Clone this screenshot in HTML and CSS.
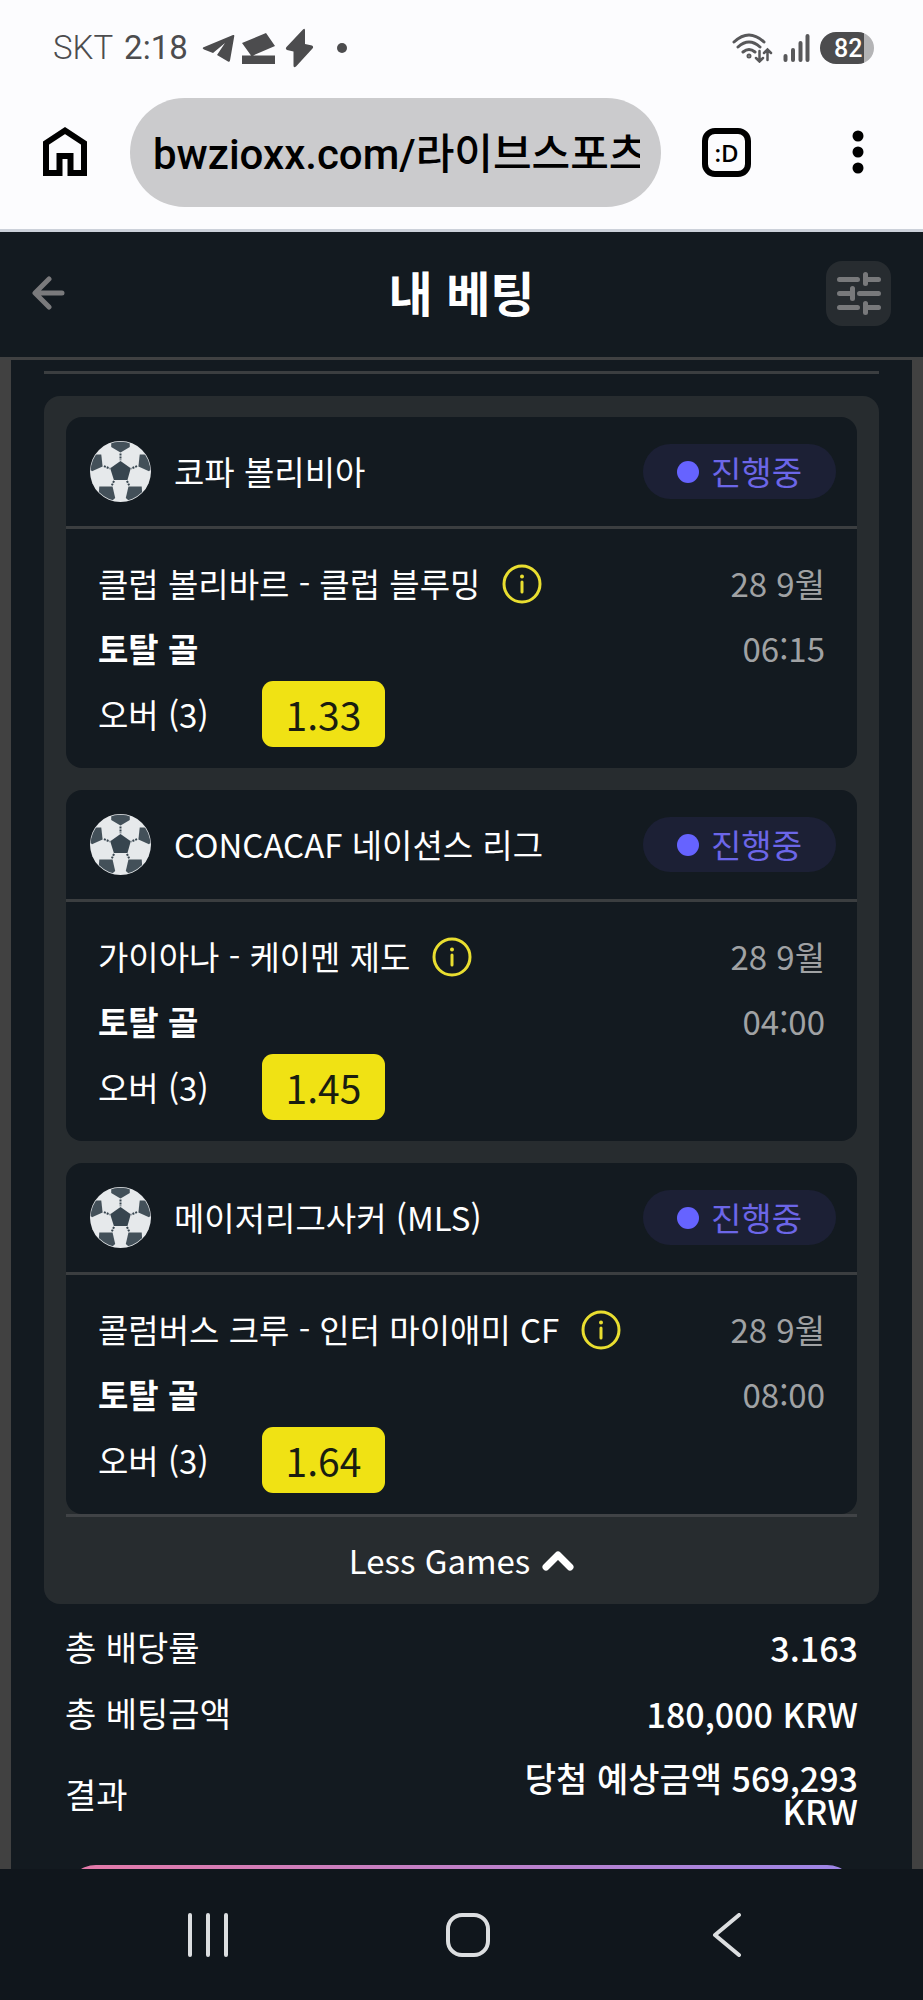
FILE: index.html
```html
<!DOCTYPE html>
<html lang="ko">
<head>
    <meta charset="UTF-8">
    <meta name="viewport" content="width=device-width, initial-scale=1.0">
    <title>내 베팅</title>
    <link rel="stylesheet" href="styles.css">
</head>
<body>
    <!-- shared icons -->
    <svg class="sprite" aria-hidden="true">
        <symbol id="ball" viewBox="0 0 184 184">
            <clipPath id="ball-clip"><circle cx="92" cy="92" r="90"/></clipPath>
            <circle cx="92" cy="92" r="92" fill="#e6e9eb"/>
            <g fill="#435059" clip-path="url(#ball-clip)">
                <path fill="#37454f" d="M92 60l31 22-10 36H72L61 82z"/>
                <path d="M64 0h56v18L92 35 64 18z"/>
                <path d="M34 41l4 36L6 91l-10-10 16-40z"/>
                <path d="M150 41l-4 36 32 14 10-10-16-40z"/>
                <path d="M28 137h40l8 35-16 14-34-20z"/>
                <path d="M156 137h-40l-8 35 16 14 34-20z"/>
            </g>
            <path d="M92 38v20M42 76l18 7M142 76l-18 7M66 134l7-15M118 134l-7-15" fill="none" stroke="#37454f" stroke-width="6" stroke-dasharray="6 3"/>
        </symbol>
        <symbol id="info" viewBox="0 0 40 40">
            <circle cx="20" cy="20" r="18" fill="none" stroke="currentColor" stroke-width="3"/>
            <circle cx="20" cy="12.500" r="2" fill="currentColor"/>
            <path d="M20 18v10" stroke="currentColor" stroke-width="3" stroke-linecap="round"/>
        </symbol>
    </svg>

    <!-- STATUS BAR -->
    <div class="status-bar">
        <div class="status-left">
            <span class="carrier">SKT</span>
            <span class="clock">2:18</span>
            <svg class="status-icons" width="146" height="40" viewBox="0 0 146 40" fill="#4c4c4e">
                <path d="M1 19.500L31 7q1.500-.5 1.300 1L28 32.500q-.5 2-2 1L15 27l8-12-12 10-9-3.500q-2-1 -1-2z"/>
                <path d="M40 15l24-10 9 13-22 9.500h22V36H40v-8.500h9z"/>
                <path d="M101 1.500q2-2 2 1V16l7 1.500q2 1 .5 3L94 38.500q-2.500 2-2.500-1V23.500L85 22q-2-1-.5-3z"/>
                <circle cx="140" cy="20" r="5"/>
            </svg>
        </div>
        <div class="status-right">
            <svg width="41" height="30" viewBox="0 0 41 30" fill="none" stroke="#58585a" stroke-width="3" stroke-linecap="round">
                <path d="M2 9q15-14 30 0M6 14q11-10 22 0M11 19q6-5 12 0"/>
                <circle cx="17" cy="23" r="1"/>
                <path stroke-width="2.500" d="M27.500 18v10M24 25l3.500 3.500L31 25M35.500 27V17M32 20l3.500-3.500L39 20"/>
            </svg>
            <svg width="27" height="30" viewBox="0 0 27 30" stroke="#58585a" stroke-width="4" stroke-linecap="round">
                <path d="M2.500 23v4M10 17v10M17.500 10v17M24.500 3v24"/>
            </svg>
            <span class="battery">82</span>
        </div>
    </div>

    <!-- BROWSER TOOLBAR -->
    <div class="toolbar">
        <button class="icon-btn" aria-label="홈">
            <svg width="46" height="52" viewBox="0 0 46 52" fill="none" stroke="#000" stroke-width="6">
                <path d="M4 47V17L23 4.500 42 17v30H28.500V30h-11v17z"/>
            </svg>
        </button>
        <div class="address">
            <input type="text" class="address-input" value="bwzioxx.com/라이브스포츠" aria-label="주소">
        </div>
        <button class="tabs-btn" aria-label="탭">:D</button>
        <button class="icon-btn menu-btn" aria-label="메뉴">
            <svg width="12" height="46" viewBox="0 0 12 46">
                <circle cx="6" cy="7" r="5.500"/>
                <circle cx="6" cy="23" r="5.500"/>
                <circle cx="6" cy="39" r="5.500"/>
            </svg>
        </button>
    </div>

    <!-- PAGE HEADER -->
    <header class="page-header">
        <button class="icon-btn" aria-label="뒤로">
            <svg width="34" height="34" viewBox="0 0 34 34" fill="none" stroke="#7a7a7c" stroke-width="5" stroke-linecap="round" stroke-linejoin="round">
                <path d="M30 17H4M17 3L3 17l14 14"/>
            </svg>
        </button>
        <h1>내 베팅</h1>
        <button class="filter-btn" aria-label="필터">
            <svg width="65" height="65" viewBox="0 0 65 65" stroke="#78797b" stroke-width="5" stroke-linecap="round">
                <path d="M13.500 18.500h18M39.500 13.500v9M39.500 18.500h13M13.500 32.500h12M26.500 27.500v10M33.500 32.500h19M13.500 46.500h18M39.500 42.500v9M39.500 46.500h13"/>
            </svg>
        </button>
    </header>

    <!-- BET SLIP -->
    <main class="content">
        <hr class="divider">
        <section class="games">
            <article class="game">
                <div class="game-head">
                    <svg class="ball"><use href="#ball"/></svg>
                    <h2>코파 볼리비아</h2>
                    <span class="status">진행중</span>
                </div>
                <div class="game-body">
                    <div class="row">
                        <span>클럽 볼리바르 - 클럽 블루밍</span>
                        <button class="icon-btn info" aria-label="정보"><svg><use href="#info"/></svg></button>
                        <span class="when">28 9월</span>
                    </div>
                    <div class="row">
                        <strong>토탈 골</strong>
                        <span class="when">06:15</span>
                    </div>
                    <div class="row">
                        <span class="pick">오버 (3)</span>
                        <span class="odds">1.33</span>
                    </div>
                </div>
            </article>

            <article class="game">
                <div class="game-head">
                    <svg class="ball"><use href="#ball"/></svg>
                    <h2>CONCACAF 네이션스 리그</h2>
                    <span class="status">진행중</span>
                </div>
                <div class="game-body">
                    <div class="row">
                        <span>가이아나 - 케이멘 제도</span>
                        <button class="icon-btn info" aria-label="정보"><svg><use href="#info"/></svg></button>
                        <span class="when">28 9월</span>
                    </div>
                    <div class="row">
                        <strong>토탈 골</strong>
                        <span class="when">04:00</span>
                    </div>
                    <div class="row">
                        <span class="pick">오버 (3)</span>
                        <span class="odds">1.45</span>
                    </div>
                </div>
            </article>

            <article class="game">
                <div class="game-head">
                    <svg class="ball"><use href="#ball"/></svg>
                    <h2>메이저리그사커 (MLS)</h2>
                    <span class="status">진행중</span>
                </div>
                <div class="game-body">
                    <div class="row">
                        <span>콜럼버스 크루 - 인터 마이애미 CF</span>
                        <button class="icon-btn info" aria-label="정보"><svg><use href="#info"/></svg></button>
                        <span class="when">28 9월</span>
                    </div>
                    <div class="row">
                        <strong>토탈 골</strong>
                        <span class="when">08:00</span>
                    </div>
                    <div class="row">
                        <span class="pick">오버 (3)</span>
                        <span class="odds">1.64</span>
                    </div>
                </div>
            </article>

            <button class="less-btn">
                Less Games
                <svg width="32" height="22" viewBox="0 0 32 22" fill="none" stroke="#fff" stroke-width="7" stroke-linecap="round" stroke-linejoin="round">
                    <path d="M4 17L16 5l12 12"/>
                </svg>
            </button>
        </section>

        <dl class="summary">
            <div>
                <dt>총 배당률</dt>
                <dd>3.163</dd>
            </div>
            <div>
                <dt>총 베팅금액</dt>
                <dd>180,000 KRW</dd>
            </div>
            <div class="result">
                <dt>결과</dt>
                <dd>당첨 예상금액 569,293 KRW</dd>
            </div>
        </dl>
        <button class="action-btn" aria-label="베팅 공유"></button>
    </main>

    <!-- SYSTEM NAVIGATION -->
    <nav class="system-nav">
        <button class="icon-btn" aria-label="최근 앱">
            <svg width="44" height="44" viewBox="0 0 44 44"><path d="M4 2v40M22 2v40M40 2v40"/></svg>
        </button>
        <button class="icon-btn" aria-label="홈 화면">
            <svg width="44" height="44" viewBox="0 0 44 44"><rect x="2" y="2" width="40" height="40" rx="14"/></svg>
        </button>
        <button class="icon-btn" aria-label="이전">
            <svg width="44" height="44" viewBox="0 0 44 44"><path d="M34 2L10 22l24 20"/></svg>
        </button>
    </nav>
</body>
</html>
```

FILE: styles.css
```css
* {
    box-sizing: border-box;
}
body {
    margin: 0;
    height: 100vh;
    display: flex;
    flex-direction: column;
    font-family: "Noto Sans CJK KR", sans-serif;
    font-size: 33px;
    line-height: 1;
    color: #fff;
    background: #131a20;
}
h1, h2, dl, dd, hr {
    margin: 0;
}
svg {
    display: block;
}
button {
    padding: 0;
    border: none;
    background: none;
    color: inherit;
    font: inherit;
    cursor: pointer;
}
.sprite {
    position: absolute;
    width: 0;
    height: 0;
}
.icon-btn {
    flex: none;
}

/* status bar */
.status-bar {
    flex: none;
    display: flex;
    justify-content: space-between;
    align-items: center;
    height: 95px;
    padding: 0 49px 0 53px;
    background: #fcfcfe;
    color: #4c4c4e;
    font-family: Roboto, sans-serif;
}
.status-left {
    display: flex;
    align-items: center;
}
.carrier {
    font-weight: 300;
    margin-right: 11px;
}
.clock {
    margin-right: 14px;
}
.status-right {
    display: flex;
    align-items: center;
    gap: 10px;
}
.battery {
    width: 54px;
    height: 32px;
    padding-left: 14px;
    border-radius: 16px;
    background: linear-gradient(to right, #4c4c4e 44px, #b4b4b6 44px);
    color: #fff;
    font-size: 25px;
    font-weight: 500;
    line-height: 33px;
}

/* browser toolbar */
.toolbar {
    flex: none;
    display: flex;
    align-items: center;
    height: 137px;
    padding: 0 59px 20px 42px;
    border-bottom: 3px solid #ccd1da;
    background: #fcfcfe;
}
.address {
    flex: 1;
    min-width: 0;
    height: 109px;
    margin: 0 41px 0 42px;
    padding: 0 21px 4px 23px;
    border-radius: 55px;
    background: #cbcbcd;
}
.address-input {
    width: 100%;
    height: 100%;
    padding: 0;
    border: none;
    outline: none;
    background: none;
    color: #000;
    font: 500 42px Roboto, "Noto Sans CJK KR Bold", "Noto Sans CJK KR", sans-serif;
}
.tabs-btn {
    flex: none;
    width: 49px;
    height: 49px;
    border: 6px solid #000;
    border-radius: 13px;
    color: #000;
    font: 600 24px "Open Sans", sans-serif;
}
.menu-btn {
    margin-left: 101px;
}

/* page header */
.page-header {
    flex: none;
    display: flex;
    justify-content: space-between;
    align-items: center;
    height: 128px;
    padding: 0 32px 3px;
    border-bottom: 3px solid #404142;
}
.page-header .icon-btn {
    width: 65px;
}
.page-header h1 {
    padding-bottom: 4px;
    font-size: 48px;
    font-weight: 700;
}
.filter-btn {
    width: 65px;
    height: 65px;
    border-radius: 16px;
    background: #272c30;
}

/* bet slip */
.content {
    flex: 1;
    min-height: 0;
    padding: 11px 33px 0;
    border: solid #414141;
    border-width: 0 11px;
    overflow-y: auto;
    scrollbar-width: none;
}
.divider {
    height: 3px;
    border: none;
    background: #3b3e40;
}
.games {
    display: flex;
    flex-direction: column;
    gap: 22px;
    margin-top: 22px;
    padding: 21px 22px 0;
    border-radius: 16px;
    background: #272c2f;
}
.game {
    border-radius: 16px;
    background: #131a20;
}
.game-head {
    display: flex;
    align-items: center;
    height: 112px;
    padding: 0 21px 0 24px;
    border-bottom: 3px solid #3b3e40;
}
.game-head h2 {
    flex: 1;
    font-size: 33px;
    font-weight: 400;
}
.ball {
    width: 61px;
    height: 61px;
    margin-right: 23px;
}
.status {
    display: flex;
    align-items: center;
    height: 55px;
    padding: 0 34px;
    border-radius: 28px;
    background: #1c2035;
    color: #6c66e8;
}
.status::before {
    content: "";
    width: 22px;
    height: 22px;
    margin-right: 12px;
    border-radius: 50%;
    background: #6663ff;
}
.game-body {
    padding: 22px 32px 21px;
}
.row {
    display: flex;
    align-items: center;
    height: 65px;
}
.row:last-child {
    height: 66px;
}
.row strong {
    font-weight: 700;
}
.info {
    margin-left: 22px;
    color: #e9de30;
}
.info svg {
    width: 40px;
    height: 40px;
}
.when {
    margin-left: auto;
    color: #a0a2a4;
}
.pick {
    width: 164px;
}
.odds {
    width: 123px;
    border-radius: 11px;
    background: #f0e214;
    color: #1a1d10;
    font-size: 39px;
    line-height: 66px;
    text-align: center;
}
.less-btn {
    display: flex;
    justify-content: center;
    align-items: center;
    gap: 12px;
    height: 90px;
    margin-top: -22px;
    border-top: 3px solid #404346;
}

/* totals */
.summary {
    padding: 10px 21px 0;
    font-size: 34px;
}
.summary div {
    display: flex;
    justify-content: space-between;
    align-items: center;
    height: 66px;
}
.summary .result {
    height: 96px;
}
.summary dd {
    max-width: 380px;
    font-weight: 500;
    line-height: 33px;
    text-align: right;
}
.action-btn {
    display: block;
    width: calc(100% - 44px);
    height: 88px;
    margin: 23px 22px 22px;
    border-radius: 30px;
    background: linear-gradient(to right, #e57aa8, #9c86e8);
}

/* system navigation */
.system-nav {
    flex: none;
    display: flex;
    justify-content: space-between;
    align-items: center;
    height: 131px;
    padding: 0 174px 0 186px;
    background: #10161c;
}
.system-nav svg {
    fill: none;
    stroke: #dcdee0;
    stroke-width: 4;
    stroke-linecap: round;
    stroke-linejoin: round;
}
```
